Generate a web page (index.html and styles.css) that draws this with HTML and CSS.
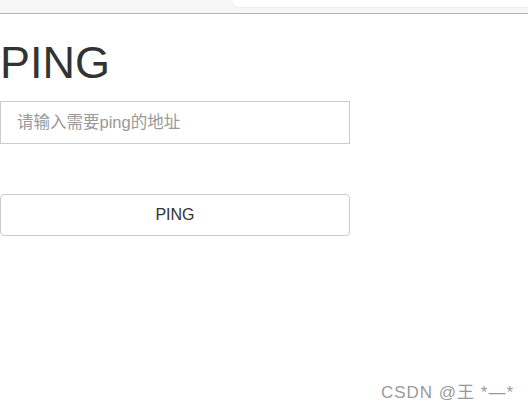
FILE: index.html
```html
<!DOCTYPE html>
<html lang="zh-CN">
<head>
    <meta charset="UTF-8">
    <title>PING</title>
    <link rel="stylesheet" href="styles.css">
</head>
<body>

    <div class="topbar">
        <div class="tab-strip"></div>
        <div class="address"></div>
    </div>

    <div class="content">
        <h1 class="title">PING</h1>
        <input type="text" class="field" placeholder="请输入需要ping的地址">
        <button class="btn">PING</button>
    </div>

    <div class="watermark">CSDN @王 *—*</div>

</body>
</html>
```

FILE: styles.css
```css
/* General */
body {
    font-family: 'Liberation Sans', Arial, 'Noto Sans CJK SC', sans-serif;
    margin: 0;
    padding: 0;
    background: white;
    color: #333;
    height: 412px;
    position: relative;
    overflow: hidden;
}

/* Browser strip */
.topbar {
    display: flex;
    height: 13px;
    background: #f6f6f6;
    border-bottom: 1px solid #b5b5b5;
}

.tab-strip {
    width: 233px;
}

.address {
    flex-grow: 1;
    height: 7px;
    background: white;
    border-radius: 0 0 0 6px;
    box-shadow: 0 1px 1px rgba(0, 0, 0, 0.04);
}

/* Form */
.content {
    width: 350px;
    display: flex;
    flex-direction: column;
}

.title {
    font-size: 45px;
    font-weight: normal;
    margin: 23px 0 12px 0;
    line-height: 52px;
    color: #333;
}

.field {
    box-sizing: border-box;
    height: 43px;
    width: 350px;
    margin: 0;
    padding: 0 16px;
    border: 1px solid #ccc;
    font-family: 'Liberation Sans', Arial, 'Noto Sans CJK SC', sans-serif;
    font-size: 16.5px;
    color: #333;
    outline: none;
}

.field::placeholder {
    color: #999;
}

.btn {
    box-sizing: border-box;
    height: 42px;
    width: 350px;
    margin-top: 50px;
    background: white;
    border: 1px solid #ccc;
    border-radius: 4px;
    font-family: 'Liberation Sans', Arial, sans-serif;
    font-size: 16px;
    color: #333;
    cursor: pointer;
}

.watermark {
    position: absolute;
    right: 14px;
    bottom: 9px;
    font-size: 17px;
    letter-spacing: 1px;
    color: #9a9a9a;
}
```
